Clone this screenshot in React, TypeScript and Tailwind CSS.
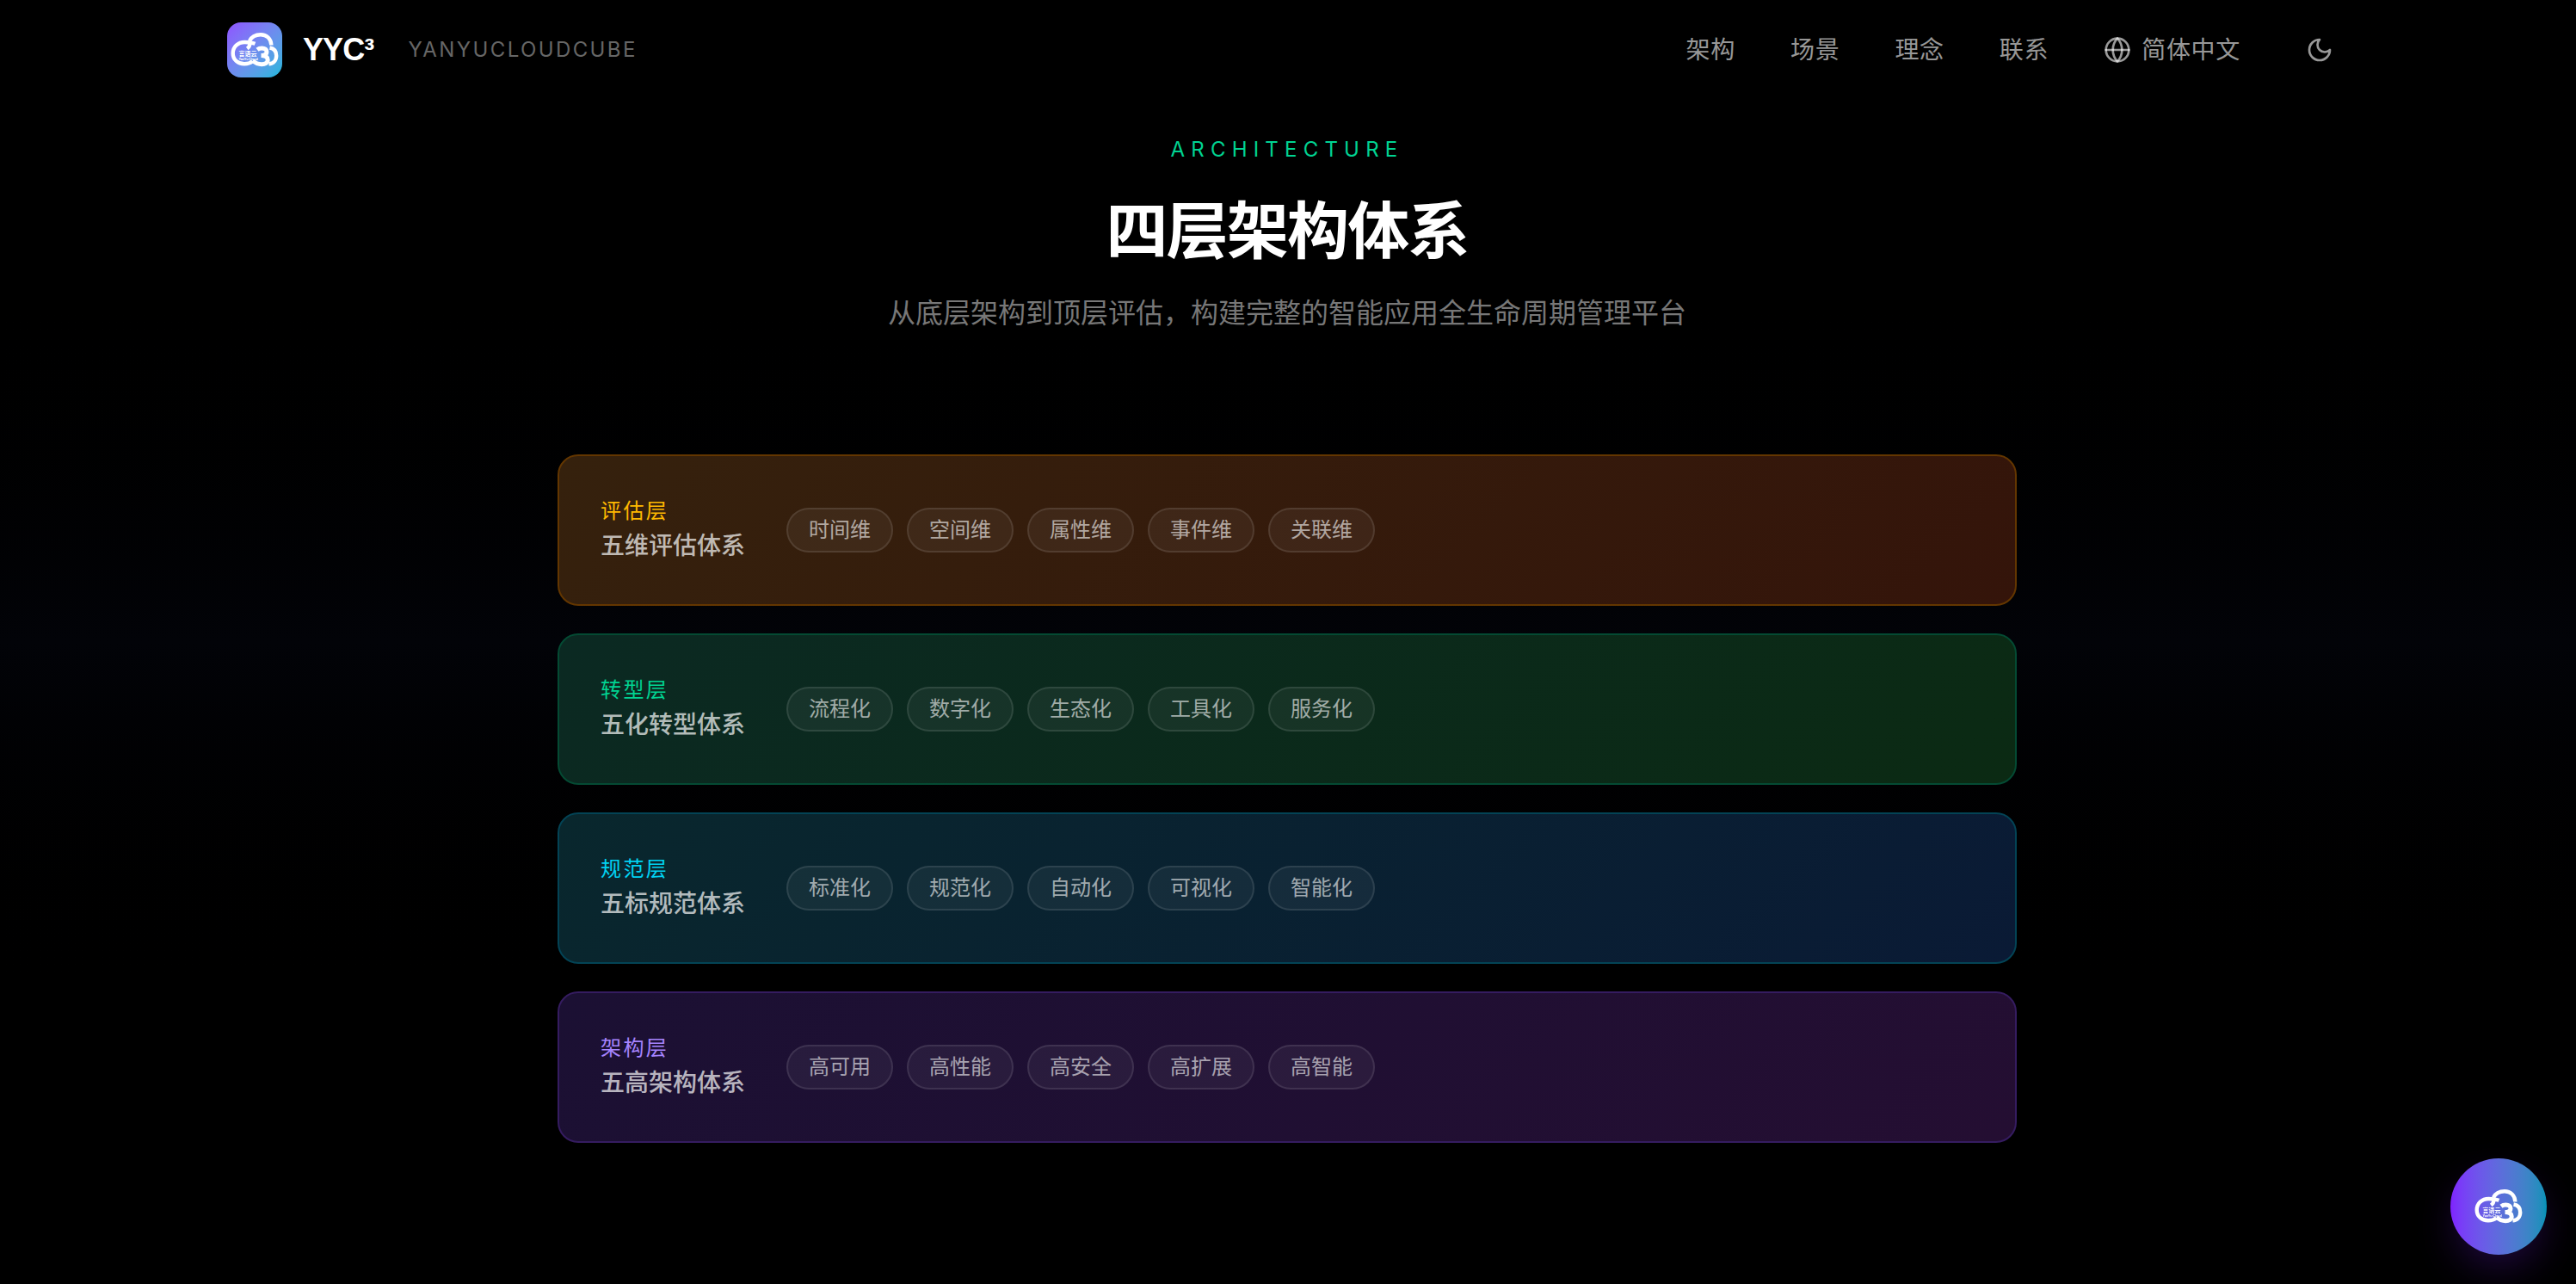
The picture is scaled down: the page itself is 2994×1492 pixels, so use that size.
import { Globe } from 'lucide-react';

interface Layer {
  label: string;
  name: string;
  tags: string[];
  card: string;
  accent: string;
}

const navItems = ['架构', '场景', '理念', '联系'];

const layers: Layer[] = [
  {
    label: '评估层',
    name: '五维评估体系',
    tags: ['时间维', '空间维', '属性维', '事件维', '关联维'],
    card: 'from-[#35210d] to-[#34140a] border-[#633600]',
    accent: 'text-amber-400',
  },
  {
    label: '转型层',
    name: '五化转型体系',
    tags: ['流程化', '数字化', '生态化', '工具化', '服务化'],
    card: 'from-[#0b2922] to-[#0b2a13] border-[#044a33]',
    accent: 'text-emerald-400',
  },
  {
    label: '规范层',
    name: '五标规范体系',
    tags: ['标准化', '规范化', '自动化', '可视化', '智能化'],
    card: 'from-[#09272d] to-[#0a1a35] border-[#034355]',
    accent: 'text-cyan-400',
  },
  {
    label: '架构层',
    name: '五高架构体系',
    tags: ['高可用', '高性能', '高安全', '高扩展', '高智能'],
    card: 'from-[#1b1033] to-[#240e32] border-[#351c60]',
    accent: 'text-violet-400',
  },
];

const CloudLogo = ({ className }: { className?: string }) => {
  return (
    <svg viewBox="0 0 56 40" className={className} fill="none" aria-hidden="true">
      <g stroke="#fff" strokeWidth="4.4">
        <path d="M22 9.500C24.500 4.500 29 2.200 35 2.200c7 0 12 4.800 12.400 12.300" />
        <path d="M28.500 12.800C25 11.500 20.500 11 16.500 11 8.500 11 2.700 16.500 2.700 24S8.500 36.300 16 36.300c4 0 7-1 9.500-3" />
        <path d="M22.500 12c0 2.800-1.200 5-3.200 6.500" />
        <path d="M45.500 17.500c4.800.8 7.700 4.300 7.700 9.300 0 5.400-3.500 9.300-8.700 9.500" />
      </g>
      <path
        stroke="#fff"
        strokeWidth="5"
        d="M31 19.700c1.500-1.200 3.300-1.700 5.500-1.700 3.300 0 5.500 1.500 5.500 4.200 0 2.800-2 4.300-6.500 4.300 5 0 7.700 1.800 7.700 5 0 3.400-3 5.200-7 5.200-3.700 0-7.500-1.500-10.500-4.200"
      />
      <text x="9.500" y="27" fontSize="7" fontWeight="700" fill="#fff" fontFamily="Noto Sans CJK SC, sans-serif">言语云</text>
      <text x="9.500" y="31.500" fontSize="3.600" fontWeight="700" fill="#fff" fontFamily="Inter, sans-serif">YanYu Cloud</text>
    </svg>
  );
};

const MoonIcon = ({ className }: { className?: string }) => {
  return (
    <svg
      viewBox="0 0 24 24"
      className={className}
      fill="none"
      stroke="currentColor"
      strokeWidth="2"
      strokeLinecap="round"
      strokeLinejoin="round"
      aria-hidden="true"
    >
      <path d="M12 3a6 6 0 0 0 9 9 9 9 0 1 1-9-9Z" />
    </svg>
  );
};

const Header = () => {
  return (
    <header>
      <div className="mx-auto flex h-[116px] max-w-[2560px] items-center justify-between px-12">
        <a href="#" className="flex items-center">
          <span className="flex size-16 items-center justify-center rounded-2xl bg-linear-to-br from-[#8e51ff] to-[#00b8db]">
            <CloudLogo className="w-14" />
          </span>
          <span className="ml-6 font-['Liberation_Sans',sans-serif] text-4xl font-bold tracking-tight text-white">YYC³</span>
          <span className="ml-10 text-2xl tracking-widest text-[#666]">YANYUCLOUDCUBE</span>
        </a>
        <nav className="flex items-center gap-16 text-[28px] tracking-wide text-white/60">
          {navItems.map((item) => (
            <a key={item} href="#">{item}</a>
          ))}
          <div className="flex items-center gap-15">
            <button type="button" className="flex items-center gap-3 tracking-wide">
              <Globe className="size-8" strokeWidth={2} />
              <span>简体中文</span>
            </button>
            <button type="button" aria-label="Toggle theme" className="p-4">
              <MoonIcon className="size-8" />
            </button>
          </div>
        </nav>
      </div>
    </header>
  );
};

const LayerCard = ({ layer }: { layer: Layer }) => {
  return (
    <li className={`flex items-center gap-12 rounded-3xl border-2 bg-linear-135 p-12 ${layer.card}`}>
      <div>
        <p className={`text-2xl tracking-widest ${layer.accent}`}>{layer.label}</p>
        <h3 className="mt-1 text-[28px] leading-10 font-medium text-white/70">{layer.name}</h3>
      </div>
      <ul className="flex flex-wrap gap-4">
        {layer.tags.map((tag) => (
          <li key={tag} className="rounded-full border-2 border-white/10 bg-white/5 px-6 py-2 text-2xl text-white/60">
            {tag}
          </li>
        ))}
      </ul>
    </li>
  );
};

export default function App() {
  return (
    <div className="min-h-screen bg-black bg-linear-to-b from-black from-20% via-[#020308] to-black to-80% pr-0.5 font-['Inter','Noto_Sans_CJK_SC',sans-serif]">
      <Header />
      <main className="mx-auto max-w-[1792px] px-12 pt-10 pb-40">
        <div className="text-center">
          <p className="text-2xl leading-9 tracking-[0.3em] text-emerald-400">ARCHITECTURE</p>
          <h2 className="mt-8 text-7xl leading-[88px] font-bold tracking-tight text-white">四层架构体系</h2>
          <p className="mt-7 text-[32px] leading-12 text-[#777]">
            从底层架构到顶层评估，构建完整的智能应用全生命周期管理平台
          </p>
        </div>
        <ul className="mt-35 space-y-8">
          {layers.map((layer) => (
            <LayerCard key={layer.label} layer={layer} />
          ))}
        </ul>
      </main>
      <button
        type="button"
        aria-label="YanYu Cloud"
        className="fixed right-[34px] bottom-[34px] flex size-28 items-center justify-center rounded-full bg-linear-to-r from-[#7f22fe] to-[#0092b8] shadow-[0_20px_50px_-10px_rgba(127,34,254,0.3)]"
      >
        <CloudLogo className="w-14" />
      </button>
    </div>
  );
}
